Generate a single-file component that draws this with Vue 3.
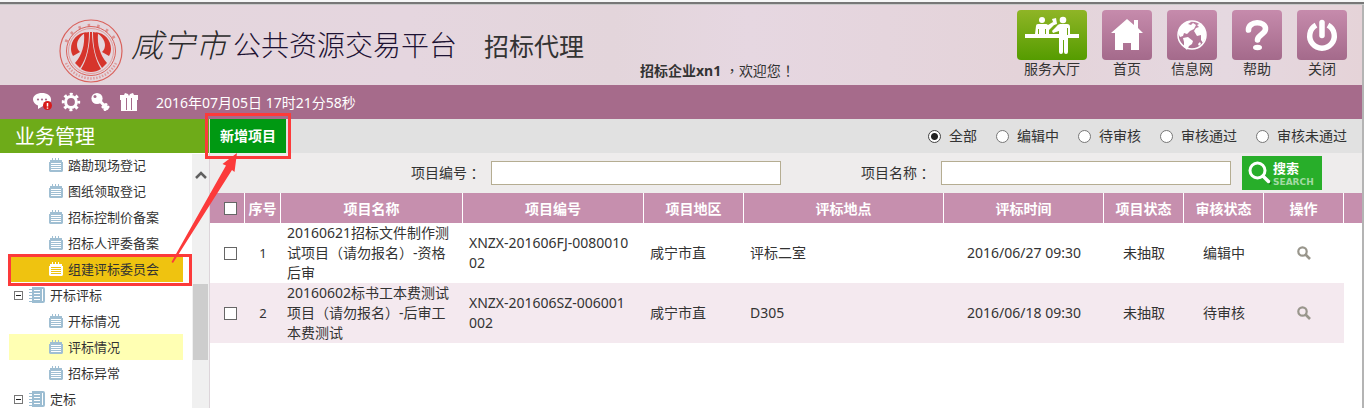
<script setup>
import { ref } from 'vue'

const nav = [
  { id: 'home', label: '首页' },
  { id: 'globe', label: '信息网' },
  { id: 'help', label: '帮助' },
  { id: 'power', label: '关闭' },
]

const tree = [
  { label: '踏勘现场登记' },
  { label: '图纸领取登记' },
  { label: '招标控制价备案' },
  { label: '招标人评委备案' },
  { label: '组建评标委员会', state: 'active' },
  { label: '开标评标', parent: true },
  { label: '开标情况' },
  { label: '评标情况', state: 'hover' },
  { label: '招标异常' },
  { label: '定标', parent: true },
]

const filters = ['全部', '编辑中', '待审核', '审核通过', '审核未通过']
const filter = ref('全部')
const code = ref('')
const name = ref('')

const rows = [
  {
    no: 1,
    name: '20160621招标文件制作测试项目（请勿报名）-资格后审',
    code: 'XNZX-201606FJ-008001002',
    area: '咸宁市直',
    place: '评标二室',
    time: '2016/06/27 09:30',
    status: '未抽取',
    audit: '编辑中',
  },
  {
    no: 2,
    name: '20160602标书工本费测试项目（请勿报名）-后审工本费测试',
    code: 'XNZX-201606SZ-006001002',
    area: '咸宁市直',
    place: 'D305',
    time: '2016/06/18 09:30',
    status: '未抽取',
    audit: '待审核',
  },
]
</script>

<template>
  <div class="page">
    <div class="edge"></div>
    <div class="frame">
      <header class="header">
        <svg class="logo" viewBox="0 0 64 64" aria-hidden="true">
          <g fill="none" stroke="#d9625c">
            <circle cx="32" cy="32" r="31" stroke-width="1.2" />
            <circle cx="32" cy="32" r="24.500" stroke-width="1" />
            <circle cx="32" cy="32" r="22.500" stroke-width=".5" />
            <path d="M7 23A27 27 0 0 1 57 23" stroke-width="3" stroke-dasharray="2.5 7" opacity=".6" />
            <path d="M7 44A28 28 0 0 0 57 44" stroke-width="2.500" stroke-dasharray="1.5 1.5" opacity=".5" />
          </g>
          <g fill="#d6342c">
            <path d="M28 13C18 14 12 21 12 30c0 3 1 5 2 7l7-4c-2-2-3-4-3-7 0-5 4-10 10-13z" />
            <path d="M36 13c10 1 16 8 16 17 0 3-1 5-2 7l-7-4c2-2 3-4 3-7 0-5-4-10-10-13z" />
            <path d="M25 14l5-1c0 13-2 26-9 36l-5-5c7-8 10-18 9-30z" />
            <path d="M39 14l-5-1c0 13 2 26 9 36l5-5c-7-8-10-18-9-30z" />
            <path d="M31 13h2c0 13 3 28 9 37-6 4-14 4-20 0 6-9 9-24 9-37z" />
          </g>
        </svg>
        <h1 class="brand"><span class="city">咸宁市</span><span class="platform">公共资源交易平台</span></h1>
        <span class="role">招标代理</span>
        <p class="user"><b>招标企业xn1</b> <span class="mid">，</span>欢迎您<span class="mid">！</span></p>
        <nav class="nav">
          <a class="tile wide" href="#hall">
            <span class="pic green">
              <svg width="56" height="40" viewBox="0 0 56 40" fill="#fff">
                <circle cx="18" cy="5" r="3" />
                <path d="M14 9h8q1 0 2 1l5-3 2 2-6 6v4h-3v-5h-1v5h-6v-5h-1v5h-3l1-8q0-2 2-2z" />
                <path d="M28 4l4-1 1 6-3 1z" />
                <circle cx="39" cy="5" r="3.300" />
                <path d="M36 9h7q3 0 3 3v8h-2v17q0 2-2 2t-2-2V25h-1v12q0 2-2 2t-2-2V16l-6 2-1-2 4-4q2-3 4-3z" />
                <path d="M1 19h54v4H1z" />
                <path d="M43.500 13v7" stroke="#72a612" />
              </svg>
            </span>
            <span>服务大厅</span>
          </a>
          <a v-for="n in nav" :key="n.id" class="tile" :href="'#' + n.id">
            <span class="pic">
              <svg v-if="n.id === 'home'" width="34" height="34" viewBox="0 0 34 34" fill="#fff">
                <path d="M17 1L1 15h4v17h8v-7h8v7h8V15h4l-5-5V2h-4v5z" />
              </svg>
              <svg v-else-if="n.id === 'globe'" width="34" height="34" viewBox="0 0 34 34">
                <circle cx="17" cy="17" r="14" fill="none" stroke="#fff" stroke-width="1.500" />
                <path fill="#fff" d="M4 11q4-7 10-8l2 1-3 2 3 1 2-2 3 2-2 4-4 2-3 3-3-1-1 3-3 1-2-4zM8 20l5-1 5 4-1 3-3 2-2 4-3-3v-5zM22 7l4-2 4 7 1 7-3 6-2-3v-5l-4 1-3-5 2-3 3-1zM25 24l1 2-2 2-1-2z" />
              </svg>
              <svg v-else-if="n.id === 'help'" width="34" height="34" viewBox="0 0 34 34">
                <path d="M8.500 12C8 2.500 26 2.500 25.500 11c0 5-8 6-8 11" fill="none" stroke="#fff" stroke-width="5.600" stroke-linecap="round" />
                <ellipse cx="17.500" cy="29.500" rx="4.500" ry="2.800" fill="#fff" />
              </svg>
              <svg v-else width="34" height="34" viewBox="0 0 34 34" fill="none" stroke="#fff">
                <path d="M11 7.200A12.300 12.300 0 1 0 23 7.200" stroke-width="5.400" />
                <path d="M17 4.500v13" stroke-width="5.500" stroke-linecap="round" />
              </svg>
            </span>
            <span>{{ n.label }}</span>
          </a>
        </nav>
      </header>

      <div class="bar">
        <button class="tool" aria-label="消息">
          <svg width="20" height="20" viewBox="0 0 20 20">
            <path fill="#fff" d="M10 1c5 0 9 2.500 9 6.500S15 14 11 14l-5 3v-3.500C3 12.500 1 10 1 7.500 1 3.500 5 1 10 1z" />
            <g fill="#a66b8b"><circle cx="6" cy="7.500" r="1.100" /><circle cx="10" cy="7.500" r="1.100" /><circle cx="14" cy="7.500" r="1.100" /></g>
            <circle cx="15.500" cy="13.500" r="4.500" fill="#d81a1a" />
            <path d="M15.500 11v3.500M15.500 15.500v1.300" stroke="#fff" stroke-width="1.500" />
          </svg>
        </button>
        <button class="tool" aria-label="设置">
          <svg width="20" height="20" viewBox="0 0 20 20" fill="none" stroke="#fff">
            <circle cx="10" cy="10" r="5.400" stroke-width="3" />
            <circle cx="10" cy="10" r="7.800" stroke-width="2.800" stroke-dasharray="3 3.126" stroke-dashoffset="1.500" />
          </svg>
        </button>
        <button class="tool" aria-label="密钥">
          <svg width="20" height="20" viewBox="0 0 20 20">
            <path d="M9 8l8 8.500M13 15l3-2.500M15 17.500l3-2.500" stroke="#fff" stroke-width="3" stroke-linecap="round" />
            <circle cx="7" cy="6.500" r="5.600" fill="#fff" /><circle cx="5" cy="4.500" r="1.500" fill="#a66b8b" />
          </svg>
        </button>
        <button class="tool" aria-label="礼物">
          <svg width="20" height="20" viewBox="0 0 20 20">
            <path fill="#fff" d="M1 3h4l1-2 3 1 1 2 1-2 3-1 1 2h4v5h-1v11H2V8H1z" />
            <path d="M7.500 6v12M12.500 6v12" stroke="#a66b8b" />
          </svg>
        </button>
        <time class="clock">2016年07月05日 17时21分58秒</time>
      </div>

      <div class="main">
        <aside class="side">
          <h2 class="side-title">业务管理</h2>
          <div class="scroller">
            <ul class="tree">
              <li v-for="t in tree" :key="t.label" :class="['node', t.state, { parent: t.parent }]">
                <button v-if="t.parent" class="fold" :aria-label="'折叠' + t.label"></button>
                <svg v-if="t.parent" width="16" height="16" viewBox="0 0 16 16" fill="#9cbdd2">
                  <path d="M3 0h11q2 0 2 2v12q0 2-2 2H3zM0 2h3v1H0zM0 5h3v1H0zM0 8h3v1H0zM0 11h3v1H0zM0 14h3v1H0z" />
                  <path d="M5 3.500h6M5 6.500h6M5 9.500h6M5 12.500h6M13.500 2v12" stroke="#fff" fill="none" />
                </svg>
                <svg v-else class="note" width="14" height="14" viewBox="0 0 14 14">
                  <path fill="currentColor" d="M1 2h2V0h1v2h2V0h1v2h2V0h1v2h3v2h1v9l-1 1H1l-1-1V4h1z" />
                  <path class="lines" d="M2 5.500h10M2 7.500h10M2 9.500h10M2 11.500h10" />
                </svg>
                <a :href="'#' + t.label">{{ t.label }}</a>
              </li>
            </ul>
            <div class="track">
              <svg width="12" height="10" viewBox="0 0 12 10" fill="none" stroke="#606060" stroke-width="2.500"><path d="M1 8l5-5 5 5" /></svg>
              <div class="thumb"></div>
            </div>
          </div>
        </aside>

        <section class="content">
          <div class="actions">
            <button class="add">新增项目</button>
            <div class="filters" role="radiogroup" aria-label="审核状态">
              <label v-for="f in filters" :key="f"><input v-model="filter" type="radio" name="filter" :value="f" />{{ f }}</label>
            </div>
          </div>
          <form class="search" @submit.prevent>
            <label class="field">项目编号<span class="mid">：</span><input v-model="code" type="text" /></label>
            <label class="field">项目名称<span class="mid">：</span><input v-model="name" type="text" /></label>
            <button class="go" type="submit">
              <svg width="24" height="24" viewBox="0 0 24 24" fill="none" stroke-linecap="round">
                <path d="M17 16l5 6" stroke="#1a7d1e" stroke-width="3" />
                <circle cx="9.500" cy="9.500" r="7.500" stroke="#fff" stroke-width="3" />
                <path d="M15 15l5.500 5.500" stroke="#fff" stroke-width="3.500" />
              </svg>
              <span class="go-text"><b>搜索</b><span>SEARCH</span></span>
            </button>
          </form>
          <table class="grid">
            <colgroup>
              <col class="c-check" /><col class="c-no" /><col class="c-name" /><col class="c-code" /><col class="c-area" />
              <col class="c-place" /><col class="c-time" /><col class="c-state" /><col class="c-state" /><col class="c-state" /><col />
            </colgroup>
            <thead>
              <tr>
                <th class="check"><input type="checkbox" aria-label="全选" /></th>
                <th>序号</th><th>项目名称</th><th>项目编号</th><th>项目地区</th><th>评标地点</th>
                <th>评标时间</th><th>项目状态</th><th>审核状态</th><th>操作</th><th></th>
              </tr>
            </thead>
            <tbody>
              <tr v-for="r in rows" :key="r.no">
                <td class="check"><input type="checkbox" :aria-label="'选择' + r.no" /></td>
                <td class="mid-cell no">{{ r.no }}</td>
                <td>{{ r.name }}</td>
                <td class="code">{{ r.code }}</td>
                <td>{{ r.area }}</td>
                <td>{{ r.place }}</td>
                <td class="mid-cell">{{ r.time }}</td>
                <td class="mid-cell">{{ r.status }}</td>
                <td class="mid-cell">{{ r.audit }}</td>
                <td class="mid-cell">
                  <button class="view" aria-label="查看">
                    <svg width="14" height="14" viewBox="0 0 14 14" fill="none" stroke="#99968c">
                      <circle cx="5.500" cy="5.500" r="4.200" stroke-width="2.200" /><path d="M8.500 8.500l4.500 4.500" stroke-width="2.600" />
                    </svg>
                  </button>
                </td>
                <td class="rest"></td>
              </tr>
            </tbody>
          </table>
        </section>
      </div>
    </div>

    <svg class="marks" width="300" height="300" viewBox="0 0 300 300" aria-hidden="true">
      <g fill="none" stroke="#fc3a3a" stroke-width="3">
        <rect x="206.500" y="114.500" width="83" height="43" />
        <rect x="9.500" y="255.500" width="181" height="29" />
      </g>
      <path fill="#fc3a3a" d="M237 153l-14.500 11 3.500 1.500L171.500 262l1.500 1 59-93 2.500 2z" />
    </svg>
  </div>
</template>

<style>
body { margin: 0; }
</style>

<style scoped>
* { box-sizing: border-box; }
.page {
  position: relative;
  display: flex;
  flex-direction: column;
  height: 100vh;
  overflow: hidden;
  background: #fff;
  color: #333;
  font: 14px/20px "Noto Sans", "Noto Sans CJK SC", sans-serif;
}
button { padding: 0; border: 0; background: none; font: inherit; color: inherit; cursor: pointer; }
a { color: inherit; text-decoration: none; }
svg { display: block; flex: none; }
.mid { font-family: "Noto Sans CJK TC", sans-serif; }
.edge { flex: none; height: 5px; background: #f6f7f7; border-bottom: 1px solid #c9c9c9; box-shadow: inset 0 -2px #777; }
.frame { flex: 1; min-height: 0; display: flex; flex-direction: column; border-right: 2px solid #b4b4b4; }

.header {
  flex: none;
  display: flex;
  height: 80px;
  padding-left: 59px;
  padding-right: 15px;
  background: linear-gradient(90deg, #e4d6dc, #e5d6df 30%, #e3d5db 45%, #e6d7e1 55%, #e4d3d9 75%, #e5d8e0 90%, #e5d3d8);
}
.logo { width: 64px; height: 64px; margin-top: 14px; }
.brand { display: flex; align-items: center; height: 80px; margin: 0 0 0 8px; font-weight: 300; white-space: nowrap; }
.city { width: 102px; font-size: 32px; font-style: italic; color: #2b2b2b; }
.platform { font-size: 28px; color: #1d1233; }
.role { margin-left: 27px; font-size: 25px; line-height: 82px; white-space: nowrap; }
.user { margin: 55px 0 0 56px; white-space: nowrap; }
.nav { display: flex; gap: 15px; margin-left: auto; padding-top: 5px; }
.tile { display: flex; flex-direction: column; align-items: center; width: 50px; white-space: nowrap; line-height: 18px; }
.wide { width: 70px; }
.pic {
  display: flex;
  align-items: center;
  justify-content: center;
  width: 100%;
  height: 50px;
  border-radius: 4px;
  background: linear-gradient(#c68bac, #a46a8b);
}
.green { background: linear-gradient(#8fb526, #559c00); }

.bar { flex: none; display: flex; align-items: center; gap: 9px; height: 34px; padding-left: 32px; background: #a66b8b; color: #fff; }
.tool { display: flex; }
.clock { margin-left: 8px; padding-top: 2px; }

.main { flex: 1; display: flex; min-height: 0; }
.side { flex: none; display: flex; flex-direction: column; width: 210px; border-right: 1px solid #ddd5da; }
.side-title { flex: none; height: 34px; margin: 0; padding-left: 15px; background: #6eab19; color: #fff; font-size: 20px; font-weight: 400; line-height: 36px; }
.scroller { flex: 1; display: flex; min-height: 0; overflow: hidden; }
.tree { flex: 1; margin: -1px 9px 0 9px; padding: 0; list-style: none; font-size: 13px; }
.node { display: flex; align-items: center; gap: 5px; height: 26px; padding-left: 40px; }
.parent { padding-left: 5px; }
.active { background: #efc310; color: #333; }
.hover { background: #ffffb3; }
.note { color: #a0bfd3; }
.active .note { color: #fff; }
.lines { stroke: #fff; }
.active .lines { stroke: #efc310; }
.fold { width: 9px; height: 9px; border: 1px solid #777; background: linear-gradient(#222, #222) center / 5px 1px no-repeat; margin-right: 1px; }
.track { display: flex; flex-direction: column; align-items: center; width: 17px; margin-top: 1px; padding-top: 16px; background: #f0f0f0; }
.thumb { width: 15px; height: 76px; margin-top: 104px; background: #cdcdcd; }

.content { flex: 1; min-width: 0; }
.actions { display: flex; justify-content: space-between; align-items: center; height: 34px; padding-right: 15px; background: #e1e1e1; }
.add { width: 76px; height: 34px; background: #009912; color: #fff; font-weight: 700; }
.filters { display: flex; gap: 19px; }
.filters label { display: flex; align-items: center; gap: 8px; }
input { appearance: none; margin: 0; background: #fff; font: inherit; }
input[type="radio"] { width: 13px; height: 13px; border: 1px solid #777; border-radius: 50%; }
input[type="radio"]:checked { border-color: #444; background: radial-gradient(#222 0 3px, #fff 4px); }
input[type="checkbox"] { display: block; width: 13px; height: 13px; border: 1px solid #666; }
.search { display: flex; align-items: center; justify-content: flex-end; height: 40px; padding-right: 40px; background: #eeecec; }
.field { display: flex; align-items: center; margin-right: 80px; }
.field + .field { margin-right: 11px; }
.field input { width: 290px; height: 24px; margin-left: 10px; padding: 0 4px; border: 1px solid #b5ad92; }
.go { display: flex; align-items: center; gap: 1px; width: 80px; height: 34px; padding-left: 6px; background: #28ae2a; color: #fff; text-align: left; }
.go-text { display: flex; flex-direction: column; font-size: 13px; line-height: 18px; }
.go-text span { color: #a3dba4; font: 700 9px/11px "DejaVu Sans", sans-serif; }

.grid { width: 100%; table-layout: fixed; border-collapse: separate; border-spacing: 0; }
.c-check { width: 35px; }
.c-no { width: 36px; }
.c-name { width: 182px; }
.c-code { width: 181px; }
.c-area { width: 100px; }
.c-place { width: 200px; }
.c-time { width: 160px; }
.c-state { width: 80px; }
th { height: 30px; padding: 2px 0 0; border-right: 1px solid #fff; background: #c68fae; color: #fff; font-weight: 700; }
th:last-child { border-right: 0; }
td { height: 60px; padding: 0 6px; }
th.check, td.check { padding: 0 0 0 14px; }
td.code { padding-right: 12px; word-break: break-all; }
td.mid-cell { padding: 0; text-align: center; }
.no { font-size: 13px; }
tbody tr:nth-child(even) td:not(.rest) { background: #f4e9ef; }
.view { display: block; margin: 0 auto; }
.marks { position: absolute; left: 0; top: 0; pointer-events: none; }
</style>
